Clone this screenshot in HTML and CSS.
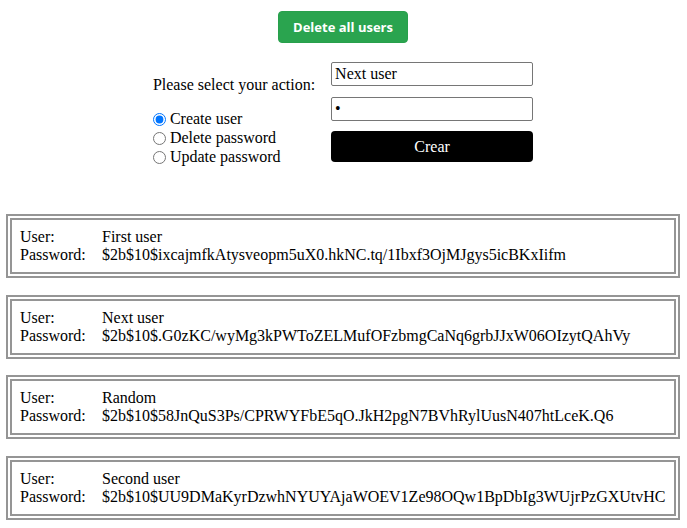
FILE: index.html
```html
<!DOCTYPE html>
<html>
<head>
<meta charset="utf-8">
<link rel="stylesheet" href="styles.css">
</head>
<body>
<div class="top">
  <button class="btn-delete-all">Delete all users</button>
  <div class="form">
    <div class="left">
      <div class="prompt">Please select your action:</div>
      <label class="opt"><input type="radio" name="act" checked>Create user</label>
      <label class="opt"><input type="radio" name="act">Delete password</label>
      <label class="opt"><input type="radio" name="act">Update password</label>
    </div>
    <div class="right">
      <input class="field" type="text" value="Next user">
      <input class="field" type="password" value="a">
      <button class="btn-crear">Crear</button>
    </div>
  </div>
</div>
<div class="list">
  <div class="card">
    <div class="k">User:</div><div class="v">First user</div>
    <div class="k">Password:</div><div class="v">$2b$10$ixcajmfkAtysveopm5uX0.hkNC.tq/1Ibxf3OjMJgys5icBKxIifm</div>
  </div>
  <div class="card">
    <div class="k">User:</div><div class="v">Next user</div>
    <div class="k">Password:</div><div class="v">$2b$10$.G0zKC/wyMg3kPWToZELMufOFzbmgCaNq6grbJJxW06OIzytQAhVy</div>
  </div>
  <div class="card">
    <div class="k">User:</div><div class="v">Random</div>
    <div class="k">Password:</div><div class="v">$2b$10$58JnQuS3Ps/CPRWYFbE5qO.JkH2pgN7BVhRylUusN407htLceK.Q6</div>
  </div>
  <div class="card">
    <div class="k">User:</div><div class="v">Second user</div>
    <div class="k">Password:</div><div class="v">$2b$10$UU9DMaKyrDzwhNYUYAjaWOEV1Ze98OQw1BpDbIg3WUjrPzGXUtvHC</div>
  </div>
</div>
</body>
</html>
```
FILE: styles.css
```css
html, body {
  margin: 0;
  padding: 0;
  background: #fff;
  font-family: "Liberation Serif", "Times New Roman", serif;
  font-size: 16px;
  color: #000;
}
.top {
  display: flex;
  flex-direction: column;
  align-items: center;
  padding-top: 11px;
  padding-right: 1px;
}
.btn-delete-all {
  height: 32px;
  width: 130px;
  background: #2aa44f;
  border: 1px solid #28a04c;
  border-radius: 4px;
  color: #fff;
  font-family: "Open Sans", "Liberation Sans", sans-serif;
  font-weight: 700;
  font-size: 13px;
  padding: 0;
}
.form {
  display: flex;
  gap: 16px;
  margin-top: 19px;
}
.left {
  display: flex;
  flex-direction: column;
  padding-top: 14px;
}
.prompt {
  margin-bottom: 15px;
}
.opt {
  display: flex;
  align-items: center;
  height: 19px;
}
.opt input {
  margin: 1px 4px 0 0;
  width: 13px;
  height: 13px;
}
.right {
  display: flex;
  flex-direction: column;
  width: 202px;
}
.field {
  box-sizing: border-box;
  height: 24px;
  width: 202px;
  border: 1px solid #767676;
  border-radius: 2px;
  padding: 1px 3px;
  font-family: "Liberation Serif", serif;
  font-size: 16px;
  margin: 0 0 11px 0;
}
.btn-crear {
  box-sizing: border-box;
  height: 31px;
  width: 202px;
  background: #000;
  color: #fff;
  border: none;
  border-radius: 4px;
  font-family: "Liberation Serif", serif;
  font-size: 16px;
  margin-top: -1px;
}
.list {
  padding: 0 7px 0 6px;
  margin-top: 48px;
  display: flex;
  flex-direction: column;
  gap: 16.67px;
}
.card {
  border: 6px double #959595;
  padding: 8px 8px;
  display: grid;
  grid-template-columns: 82px 1fr;
}
```
